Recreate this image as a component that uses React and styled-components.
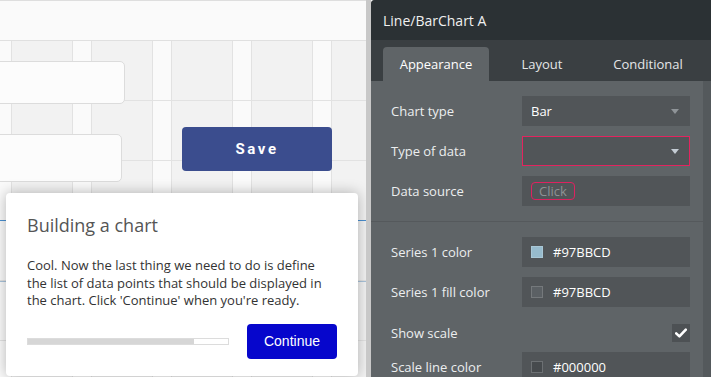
import React from 'react';
import styled, { createGlobalStyle } from 'styled-components';

const GlobalStyle = createGlobalStyle`
  html, body {
    margin: 0;
    padding: 0;
    width: 711px;
    height: 377px;
    overflow: hidden;
    background: #fafafa;
  }
  * { box-sizing: border-box; }
`;

const Page = styled.div`
  display: flex;
  width: 711px;
  height: 377px;
  font-family: 'Open Sans', 'Liberation Sans', sans-serif;
`;

/* ---------- canvas (left) ---------- */

const Canvas = styled.div`
  position: relative;
  width: 366px;
  height: 377px;
  display: flex;
  flex-direction: column;
  overflow: hidden;
  border-top: 1px solid #dedede;
`;

const CanvasTop = styled.div`
  flex-shrink: 0;
  height: 40px;
  background: #fafafa;
  border-bottom: 1px solid #e0e0e0;
`;

const Grid = styled.div`
  flex: 1;
  background-color: #fafafa;
  background-image:
    linear-gradient(to bottom, transparent 59px, #e2e2e2 59px, #e2e2e2 60px),
    linear-gradient(to right, #e2e2e2 0, #e2e2e2 1px, #f2f2f2 1px, #f2f2f2 61px, #e2e2e2 61px, #e2e2e2 62px, #fafafa 62px);
  background-size: 100% 60px, 80px 100%;
  background-position: 0 0, 11px 0;
`;

const CanvasInput = styled.div`
  position: absolute;
  left: -10px;
  top: ${p => p.$top}px;
  width: ${p => p.$w}px;
  height: ${p => p.$h}px;
  background: #fcfcfc;
  border: 1px solid #dcdcdc;
  border-radius: 5px;
`;

const SaveButton = styled.div`
  position: absolute;
  left: 182px;
  top: 126px;
  width: 150px;
  height: 44px;
  background: #3b4d8e;
  border-radius: 4px;
  display: flex;
  align-items: center;
  justify-content: center;
  color: #fff;
  font-family: Roboto, 'Liberation Sans', sans-serif;
  font-weight: 700;
  font-size: 15px;
  letter-spacing: 2.6px;
`;

const GuideLine = styled.div`
  position: absolute;
  left: 0;
  right: 0;
  top: ${p => p.$top}px;
  height: 1px;
  background: ${p => p.$color};
`;

const Popup = styled.div`
  position: absolute;
  left: 6px;
  top: 192px;
  width: 352px;
  height: 183px;
  background: #fff;
  border-radius: 4px;
  box-shadow: 0 0 14px rgba(0, 0, 0, 0.28);
  padding: 19px 21px 0 21px;
  display: flex;
  flex-direction: column;
`;

const PopupTitle = styled.div`
  font-size: 18px;
  color: #555;
  line-height: 26px;
`;

const PopupText = styled.p`
  margin: 19px 0 0 0;
  font-size: 13px;
  line-height: 17.6px;
  color: #333;
`;

const PopupFooter = styled.div`
  display: flex;
  align-items: center;
  justify-content: space-between;
  margin-top: 14px;
`;

const Progress = styled.div`
  width: 202px;
  height: 7px;
  border: 1px solid #dcdcdc;
  background: #fff;
  display: flex;
`;

const ProgressFill = styled.div`
  height: 100%;
  background: #d6d6d6;
`;

const ContinueButton = styled.div`
  width: 90px;
  height: 35px;
  background: #0606cc;
  border-radius: 4px;
  color: #fff;
  font-family: 'Liberation Sans', Arial, sans-serif;
  font-size: 14px;
  display: flex;
  align-items: center;
  justify-content: center;
`;

/* ---------- property editor (right) ---------- */

const Divider = styled.div`
  width: 5px;
  height: 377px;
  background: #c8c8c8;
`;

const Panel = styled.div`
  width: 340px;
  height: 377px;
  display: flex;
  flex-direction: column;
  background: #5f6467;
  border-top-left-radius: 4px;
  overflow: hidden;
`;

const Header = styled.div`
  flex-shrink: 0;
  height: 40px;
  background: #2b3134;
  color: #f0f0f0;
  font-size: 14px;
  display: flex;
  align-items: center;
  padding-left: 12px;
`;

const Tabs = styled.div`
  flex-shrink: 0;
  height: 41px;
  background: #3a3f42;
  display: flex;
  align-items: flex-end;
  padding-left: 12px;
`;

const Tab = styled.div`
  width: 106px;
  height: 34px;
  display: flex;
  align-items: center;
  justify-content: center;
  font-size: 13px;
  color: ${p => (p.$active ? '#ffffff' : '#e4e6e7')};
  background: ${p => (p.$active ? '#5f6467' : 'transparent')};
  border-radius: 4px 4px 0 0;
`;

const Body = styled.div`
  flex: 1;
  display: flex;
  min-height: 0;
`;

const Content = styled.div`
  width: 332px;
  display: flex;
  flex-direction: column;
`;

const Scrollbar = styled.div`
  width: 8px;
  background: #54595c;
`;

const Row = styled.div`
  flex-shrink: 0;
  display: flex;
  align-items: center;
  height: ${p => p.$h || 30}px;
  margin-top: ${p => p.$mt}px;
  padding: 0 13px 0 20px;
`;

const Label = styled.div`
  width: 131px;
  font-size: 13px;
  color: #eceeef;
`;

const Field = styled.div`
  position: relative;
  width: 168px;
  height: 30px;
  background: #515558;
  border: 1px solid ${p => (p.$error ? '#e3245f' : '#515558')};
  display: flex;
  align-items: center;
  padding-left: 8px;
  font-size: 13px;
  color: #fff;
  gap: 10px;
`;

const Arrow = styled.div`
  position: absolute;
  right: 10px;
  top: 12px;
  width: 0;
  height: 0;
  border-left: 4.5px solid transparent;
  border-right: 4.5px solid transparent;
  border-top: 5px solid ${p => (p.$light ? '#c4ccd4' : '#8f9498')};
`;

const ClickBadge = styled.div`
  width: 44px;
  height: 18px;
  border: 1px solid #de2260;
  border-radius: 4px;
  display: flex;
  align-items: center;
  justify-content: center;
  font-size: 13px;
  color: #8d9295;
`;

const Swatch = styled.div`
  width: 12px;
  height: 12px;
  background: ${p => p.$color};
  border: 1px solid ${p => p.$border};
`;

const Separator = styled.div`
  flex-shrink: 0;
  height: 1px;
  margin-top: 15px;
  background: #55595c;
`;

const Spacer = styled.div`
  flex: 1;
`;

const Checkbox = styled.div`
  width: 18px;
  height: 18px;
  background: #4d5154;
  display: flex;
  align-items: center;
  justify-content: center;
`;

function CheckIcon() {
  return (
    <svg width="12" height="10" viewBox="0 0 12 10">
      <path d="M1.2 5.4 L4.4 8.4 L10.8 1.6" fill="none" stroke="#fff" strokeWidth="2.6" strokeLinecap="round" strokeLinejoin="round" />
    </svg>
  );
}

function ColorField({ color, border, value }) {
  return (
    <Field>
      <Swatch $color={color} $border={border} />
      <span>{value}</span>
    </Field>
  );
}

export default function App() {
  return (
    <Page>
      <GlobalStyle />
      <Canvas>
        <CanvasTop />
        <Grid />
        <CanvasInput $top={60} $w={135} $h={43} />
        <CanvasInput $top={133} $w={132} $h={48} />
        <SaveButton>Save</SaveButton>
        <GuideLine $top={219} $color="#4a8fd0" />
        <GuideLine $top={280} $color="#a9c3da" />
        <Popup>
          <PopupTitle>Building a chart</PopupTitle>
          <PopupText>
            Cool. Now the last thing we need to do is define the list of data points that should be displayed in
            the chart. Click 'Continue' when you're ready.
          </PopupText>
          <PopupFooter>
            <Progress>
              <ProgressFill style={{ width: '83%' }} />
            </Progress>
            <ContinueButton>Continue</ContinueButton>
          </PopupFooter>
        </Popup>
      </Canvas>
      <Divider />
      <Panel>
        <Header>Line/BarChart A</Header>
        <Tabs>
          <Tab $active>Appearance</Tab>
          <Tab>Layout</Tab>
          <Tab>Conditional</Tab>
        </Tabs>
        <Body>
          <Content>
            <Row $mt={15}>
              <Label>Chart type</Label>
              <Field>
                Bar
                <Arrow />
              </Field>
            </Row>
            <Row $mt={10}>
              <Label>Type of data</Label>
              <Field $error>
                <Arrow $light />
              </Field>
            </Row>
            <Row $mt={10}>
              <Label>Data source</Label>
              <Field>
                <ClickBadge>Click</ClickBadge>
              </Field>
            </Row>
            <Separator />
            <Row $mt={15}>
              <Label>Series 1 color</Label>
              <ColorField color="#97bbcd" border="#a9c7d6" value="#97BBCD" />
            </Row>
            <Row $mt={10}>
              <Label>Series 1 fill color</Label>
              <ColorField color="#5b6064" border="#75797c" value="#97BBCD" />
            </Row>
            <Row $mt={17} $h={18}>
              <Label>Show scale</Label>
              <Spacer />
              <Checkbox>
                <CheckIcon />
              </Checkbox>
            </Row>
            <Row $mt={10}>
              <Label>Scale line color</Label>
              <ColorField color="#464a4d" border="#6c7073" value="#000000" />
            </Row>
          </Content>
          <Scrollbar />
        </Body>
      </Panel>
    </Page>
  );
}
